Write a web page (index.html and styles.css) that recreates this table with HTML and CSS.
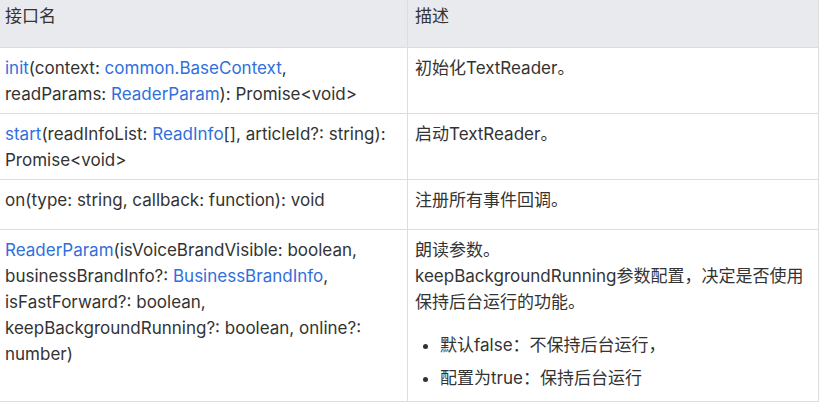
FILE: index.html
```html
<!DOCTYPE html>
<html lang="zh">
<head>
<meta charset="utf-8">
<link rel="stylesheet" href="styles.css">
</head>
<body>
<table class="api">
  <thead>
    <tr><th class="c1">接口名</th><th class="c2">描述</th></tr>
  </thead>
  <tbody>
    <tr>
      <td class="c1"><a>init</a>(context: <a>common.BaseContext</a>,<br>readParams: <a>ReaderParam</a>): Promise&lt;void&gt;</td>
      <td class="c2"><p>初始化TextReader。</p></td>
    </tr>
    <tr>
      <td class="c1"><a>start</a>(readInfoList: <a>ReadInfo</a>[], articleId?: string):<br>Promise&lt;void&gt;</td>
      <td class="c2"><p>启动TextReader。</p></td>
    </tr>
    <tr>
      <td class="c1">on(type: string, callback: function): void</td>
      <td class="c2"><p>注册所有事件回调。</p></td>
    </tr>
    <tr>
      <td class="c1"><a>ReaderParam</a>(isVoiceBrandVisible: boolean,<br>businessBrandInfo?: <a>BusinessBrandInfo</a>,<br>isFastForward?: boolean,<br>keepBackgroundRunning?: boolean, online?:<br>number)</td>
      <td class="c2"><p>朗读参数。<br>keepBackgroundRunning参数配置，决定是否使用<br>保持后台运行的功能。</p>
        <ul>
          <li>默认false：不保持后台运行，</li>
          <li>配置为true：保持后台运行</li>
        </ul>
      </td>
    </tr>
  </tbody>
</table>
</body>
</html>
```
FILE: styles.css
```css
html, body {
  margin: 0;
  padding: 0;
  background: #ffffff;
}
body {
  font-family: "Inter", "Noto Sans CJK SC", sans-serif;
  font-size: 17px;
  line-height: 26px;
  color: #333333;
}
.api {
  border-collapse: collapse;
  width: 819px;
  table-layout: fixed;
}
.api th {
  background: #e9eaed;
  font-weight: normal;
  text-align: left;
  padding: 3px 7px 18px 5px;
  vertical-align: top;
  border-bottom: 1px solid #dddddd;
}
.api td {
  padding: 7px 7px 6px 5px;
  vertical-align: top;
  border-bottom: 1px solid #dddddd;
  white-space: nowrap;
}
.api .c1 {
  width: 395px;
}
.api .c2 {
  border-left: 1px solid #dddddd;
  border-right: 1px solid #dddddd;
  padding-left: 7px;
}
.api a {
  color: #306fdc;
  text-decoration: none;
}
.api p {
  margin: 0 0 10px;
}
.api ul {
  margin: 17px 0 4px;
  padding-left: 25px;
}
.api li + li {
  margin-top: 7px;
}
```
